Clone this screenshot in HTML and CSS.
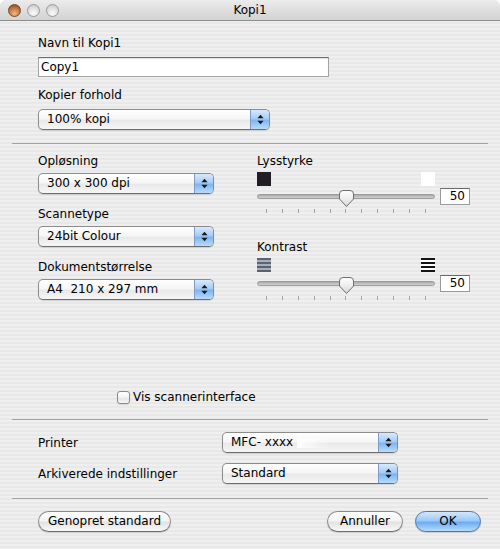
FILE: index.html
```html
<!DOCTYPE html>
<html lang="da">
<head>
<meta charset="utf-8">
<title>Kopi1</title>
<link rel="stylesheet" href="styles.css">
</head>
<body>
<div class="window">
  <div class="titlebar">
    <div class="lights">
      <span class="light close"></span>
      <span class="light"></span>
      <span class="light"></span>
    </div>
    <div class="title">Kopi1</div>
    <div></div>
  </div>

  <div class="content">
    <section class="top">
      <div class="label">Navn til Kopi1</div>
      <div class="textfield">Copy1</div>
      <div class="label label-gap">Kopier forhold</div>
      <div class="popup popup-wide">
        <span class="ptext">100% kopi</span>
        <span class="parrows"><svg width="7" height="11" viewBox="0 0 7 11"><path d="M3.5 0.8 L6.6 4.3 H0.4 Z M0.4 6.7 H6.6 L3.5 10.2 Z" fill="#1a1a1a"/></svg></span>
      </div>
    </section>

    <hr class="sep sep-top">

    <section class="mid">
      <div class="col-left">
        <div class="label">Opløsning</div>
        <div class="popup">
          <span class="ptext">300 x 300 dpi</span>
          <span class="parrows"><svg width="7" height="11" viewBox="0 0 7 11"><path d="M3.5 0.8 L6.6 4.3 H0.4 Z M0.4 6.7 H6.6 L3.5 10.2 Z" fill="#1a1a1a"/></svg></span>
        </div>
        <div class="label">Scannetype</div>
        <div class="popup">
          <span class="ptext">24bit Colour</span>
          <span class="parrows"><svg width="7" height="11" viewBox="0 0 7 11"><path d="M3.5 0.8 L6.6 4.3 H0.4 Z M0.4 6.7 H6.6 L3.5 10.2 Z" fill="#1a1a1a"/></svg></span>
        </div>
        <div class="label">Dokumentstørrelse</div>
        <div class="popup">
          <span class="ptext">A4&nbsp; 210 x 297 mm</span>
          <span class="parrows"><svg width="7" height="11" viewBox="0 0 7 11"><path d="M3.5 0.8 L6.6 4.3 H0.4 Z M0.4 6.7 H6.6 L3.5 10.2 Z" fill="#1a1a1a"/></svg></span>
        </div>
      </div>

      <div class="col-right">
        <div class="label">Lysstyrke</div>
        <div class="icon-row">
          <span class="swatch swatch-black"></span>
          <span class="swatch swatch-white"></span>
        </div>
        <div class="slider-row">
          <div class="track">
            <svg class="thumb" width="17" height="19" viewBox="0 0 17 19">
              <defs><linearGradient id="tg1" x1="0" y1="0" x2="0" y2="1"><stop offset="0" stop-color="#ffffff"/><stop offset="0.5" stop-color="#eeeeee"/><stop offset="1" stop-color="#d6d6d6"/></linearGradient></defs>
              <path d="M1.5 5 Q1.5 1.5 5 1.5 H12 Q15.5 1.5 15.5 5 V10 L8.5 17.5 L1.5 10 Z" fill="url(#tg1)" stroke="#6e6e6e" stroke-width="1"/>
            </svg>
          </div>
          <div class="numbox">50</div>
        </div>
        <div class="ticks"><i></i><i></i><i></i><i></i><i></i><i></i><i></i><i></i><i></i><i></i><i></i></div>

        <div class="label label-kontrast">Kontrast</div>
        <div class="icon-row">
          <span class="swatch contrast-low"></span>
          <span class="swatch contrast-high"></span>
        </div>
        <div class="slider-row slider-row-2">
          <div class="track">
            <svg class="thumb" width="17" height="19" viewBox="0 0 17 19">
              <defs><linearGradient id="tg2" x1="0" y1="0" x2="0" y2="1"><stop offset="0" stop-color="#ffffff"/><stop offset="0.5" stop-color="#eeeeee"/><stop offset="1" stop-color="#d6d6d6"/></linearGradient></defs>
              <path d="M1.5 5 Q1.5 1.5 5 1.5 H12 Q15.5 1.5 15.5 5 V10 L8.5 17.5 L1.5 10 Z" fill="url(#tg2)" stroke="#6e6e6e" stroke-width="1"/>
            </svg>
          </div>
          <div class="numbox">50</div>
        </div>
        <div class="ticks"><i></i><i></i><i></i><i></i><i></i><i></i><i></i><i></i><i></i><i></i><i></i></div>
      </div>
    </section>

    <div class="check"><span class="checkbox"></span><span>Vis scannerinterface</span></div>

    <hr class="sep sep-check">

    <section class="printer">
      <div class="plabel">Printer</div>
      <div class="popup">
        <span class="ptext">MFC- xxxx<span class="smear"></span></span>
        <span class="parrows"><svg width="7" height="11" viewBox="0 0 7 11"><path d="M3.5 0.8 L6.6 4.3 H0.4 Z M0.4 6.7 H6.6 L3.5 10.2 Z" fill="#1a1a1a"/></svg></span>
      </div>
      <div class="plabel">Arkiverede indstillinger</div>
      <div class="popup">
        <span class="ptext">Standard</span>
        <span class="parrows"><svg width="7" height="11" viewBox="0 0 7 11"><path d="M3.5 0.8 L6.6 4.3 H0.4 Z M0.4 6.7 H6.6 L3.5 10.2 Z" fill="#1a1a1a"/></svg></span>
      </div>
    </section>

    <hr class="sep sep-printer">

    <div class="buttons">
      <button class="btn btn-reset">Genopret standard</button>
      <span class="spacer"></span>
      <button class="btn btn-cancel">Annuller</button>
      <button class="btn btn-ok">OK</button>
    </div>
  </div>
</div>
</body>
</html>
```

FILE: styles.css
```css
* { box-sizing: border-box; }

html, body {
  margin: 0;
  padding: 0;
  background: #ffffff;
}

body {
  font-family: "DejaVu Sans", "Liberation Sans", sans-serif;
  font-size: 12px;
  color: #000;
}

.window {
  width: 500px;
  height: 549px;
  border-radius: 6px 6px 0 0;
  overflow: hidden;
  background: repeating-linear-gradient(to bottom, #efefef 0, #efefef 2px, #e8e8e8 2px, #e8e8e8 4px);
}

/* Title bar */
.titlebar {
  height: 21px;
  display: grid;
  grid-template-columns: 1fr auto 1fr;
  align-items: center;
  background: linear-gradient(to bottom, #ececec, #dcdcdc 60%, #d3d3d3);
  border-bottom: 1px solid #8c8c8c;
}

.lights {
  display: flex;
  gap: 6px;
  padding-left: 8px;
}

.light {
  width: 13px;
  height: 13px;
  border-radius: 50%;
  border: 1px solid #9a9a9a;
  background: radial-gradient(circle at 50% 75%, #fbfbfb 0, #e4e4e4 45%, #c3c3c3 100%);
}

.light.close {
  border-color: #7a4526;
  background: radial-gradient(circle at 50% 80%, #f0b880 0, #c47c48 50%, #7d4323 100%);
}

.title {
  font-size: 12px;
  line-height: 20px;
}

/* Content */
.content {
  padding: 0 12px;
}

.label {
  line-height: 16px;
  height: 16px;
  margin-bottom: 4px;
}

.top {
  padding: 14px 0 0 26px;
}

.top .label {
  margin-bottom: 6px;
}

.top .label-gap {
  margin-top: 10px;
}

.textfield {
  width: 291px;
  height: 20px;
  border: 1px solid #a3a3a3;
  border-top-color: #6f6f6f;
  background: #fff;
  box-shadow: inset 0 1px 1px rgba(0,0,0,0.12);
  padding-left: 2px;
  line-height: 18px;
}

.sep {
  border: 0;
  height: 1px;
  margin: 0;
  background: #a2a2a2;
}

.sep-top { margin-top: 13px; }

/* Popup buttons */
.popup {
  display: flex;
  width: 176px;
  height: 21px;
  border: 1px solid #8c8c8c;
  border-bottom-color: #6e6e6e;
  border-radius: 5px;
  overflow: hidden;
  background: linear-gradient(to bottom, #ffffff 0, #f6f6f6 45%, #e9e9e9 55%, #f6f6f6 100%);
  box-shadow: 0 1px 1px rgba(0,0,0,0.12);
}

.popup-wide { width: 232px; }

.ptext {
  flex: 1;
  padding-left: 8px;
  line-height: 19px;
  white-space: nowrap;
}

.smear {
  display: inline-block;
  width: 34px;
  height: 10px;
  margin-left: 4px;
  vertical-align: middle;
  background: linear-gradient(to right, rgba(255,255,255,0.9), rgba(255,255,255,0));
}

.parrows {
  width: 19px;
  display: flex;
  align-items: center;
  justify-content: center;
  border-left: 1px solid #7d9cc6;
  background: linear-gradient(to bottom, #d8e9fc 0, #a7ccf5 45%, #80b5f1 55%, #b9dbfc 100%);
}

/* Middle section */
.mid {
  display: flex;
  padding: 9px 0 0 26px;
}

.col-left {
  width: 219px;
}

.col-left .popup {
  margin-bottom: 12px;
}

.col-left .popup:last-child {
  margin-bottom: 0;
}

.col-right {
  width: 213px;
}

.icon-row {
  width: 178px;
  height: 14px;
  display: flex;
  justify-content: space-between;
  margin-top: -1px;
}

.swatch {
  width: 14px;
  height: 14px;
}

.swatch-black { background: #221c26; }
.swatch-white { background: #ffffff; }

.contrast-low {
  background: repeating-linear-gradient(to bottom, #5a6470 0, #5a6470 2px, #a6afba 2px, #a6afba 4px);
}

.contrast-high {
  background: repeating-linear-gradient(to bottom, #141414 0, #141414 2px, #ffffff 2px, #ffffff 4px);
}

.slider-row {
  display: flex;
  align-items: center;
  height: 17px;
  margin-top: 2px;
}

.slider-row-2 { margin-top: 3px; }

.track {
  position: relative;
  width: 178px;
  height: 5px;
  border-radius: 3px;
  border: 1px solid #9c9c9c;
  background: linear-gradient(to bottom, #a9a9a9, #d2d2d2);
}

.thumb {
  position: absolute;
  left: 80px;
  top: -6px;
}

.numbox {
  width: 30px;
  height: 17px;
  margin-left: 5px;
  border: 1px solid #9a9a9a;
  border-top-color: #6a6a6a;
  background: #fff;
  text-align: right;
  padding-right: 4px;
  line-height: 15px;
}

.ticks {
  width: 178px;
  height: 4px;
  margin-top: 4px;
  padding: 0 9px;
  display: flex;
  justify-content: space-between;
}

.ticks i {
  width: 1px;
  height: 4px;
  background: #a5a5a5;
}

.label-kontrast {
  margin-top: 26px;
}

/* Checkbox */
.check {
  margin: 89px 0 0 105px;
  display: flex;
  align-items: center;
  height: 16px;
  line-height: 16px;
}

.checkbox {
  width: 13px;
  height: 13px;
  margin-right: 3px;
  border: 1px solid #8a8a8a;
  border-radius: 3px;
  background: linear-gradient(to bottom, #ffffff, #f2f2f2 50%, #e2e2e2 51%, #f7f7f7);
  box-shadow: 0 1px 1px rgba(0,0,0,0.1);
}

.sep-check { margin-top: 14px; }

/* Printer section */
.printer {
  display: grid;
  grid-template-columns: 184px 176px;
  row-gap: 10px;
  align-items: center;
  padding: 12px 0 0 26px;
}

.plabel {
  line-height: 16px;
}

.sep-printer { margin-top: 14px; }

/* Buttons */
.buttons {
  display: flex;
  align-items: center;
  padding: 12px 7px 0 26px;
}

.spacer { flex: 1; }

.btn {
  font-family: inherit;
  font-size: 12px;
  color: #000;
  height: 21px;
  padding: 0;
  border-radius: 11px;
  border: 1px solid #8a8a8a;
  border-bottom-color: #6e6e6e;
  background: linear-gradient(to bottom, #ffffff 0, #f4f4f4 45%, #e3e3e3 55%, #f9f9f9 100%);
  box-shadow: 0 1px 1px rgba(0,0,0,0.15);
  line-height: 19px;
}

.btn-reset { width: 133px; }
.btn-cancel { width: 76px; }

.btn-ok {
  width: 66px;
  margin-left: 12px;
  border-color: #4a76ad;
  background: linear-gradient(to bottom, #d2e7fd 0, #9ccaf6 45%, #6eacef 55%, #b3dcfe 100%);
}
```
